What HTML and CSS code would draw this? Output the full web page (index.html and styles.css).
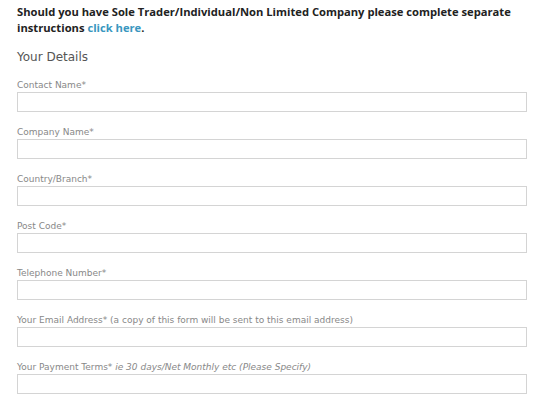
FILE: index.html
```html
<!DOCTYPE html>
<html>
<head>
<meta charset="utf-8">
<link rel="stylesheet" href="styles.css">
</head>
<body>
<div class="page">
  <p class="notice">Should you have Sole Trader/Individual/Non Limited Company please complete separate instructions <a href="#" class="link">click here</a>.</p>
  <h2 class="section">Your Details</h2>
  <form class="form">
    <div class="field"><label class="label">Contact Name*</label><input class="input" type="text"></div>
    <div class="field"><label class="label">Company Name*</label><input class="input" type="text"></div>
    <div class="field"><label class="label">Country/Branch*</label><input class="input" type="text"></div>
    <div class="field"><label class="label">Post Code*</label><input class="input" type="text"></div>
    <div class="field"><label class="label">Telephone Number*</label><input class="input" type="text"></div>
    <div class="field"><label class="label">Your Email Address* (a copy of this form will be sent to this email address)</label><input class="input" type="text"></div>
    <div class="field"><label class="label">Your Payment Terms* <em>ie 30 days/Net Monthly etc (Please Specify)</em></label><input class="input" type="text"></div>
  </form>
</div>
</body>
</html>
```
FILE: styles.css
```css
html, body { margin: 0; padding: 0; background: #fff; }
.page {
  padding: 4px 16px 0 17px;
  font-family: "DejaVu Sans", "Open Sans", sans-serif;
  color: #222;
}
.notice {
  margin: 0;
  font-family: "Open Sans", sans-serif;
  font-size: 11.2px;
  font-weight: bold;
  line-height: 16px;
  color: #222;
  width: 512px;
}
.link { color: #3a97c0; text-decoration: none; }
.section {
  margin: 12px 0 0 0;
  font-size: 12px;
  font-weight: normal;
  color: #555;
  line-height: 18px;
}
.form { display: flex; flex-direction: column; gap: 14px; margin-top: 13px; }
.field { display: flex; flex-direction: column; gap: 1px; }
.label { font-size: 9px; color: #888; line-height: 12px; }
.input {
  box-sizing: border-box;
  width: 510px;
  height: 20px;
  margin: 0;
  border: 1px solid #d4d4d4;
  background: #fff;
}
```
